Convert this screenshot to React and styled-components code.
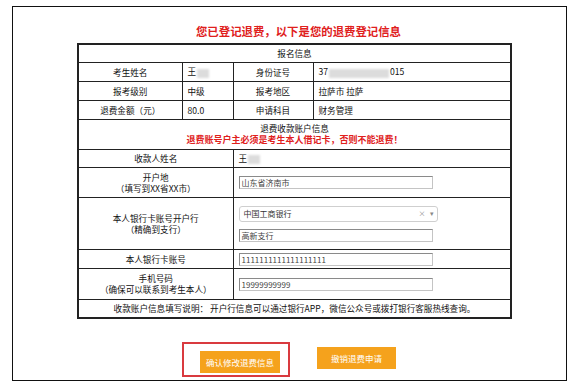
import React from "react";
import styled, { createGlobalStyle } from "styled-components";

const GlobalStyle = createGlobalStyle`
  html, body {
    margin: 0;
    padding: 0;
    background: #fff;
  }
  body {
    font-family: "Noto Sans CJK SC", "Noto Sans", sans-serif;
    color: #111;
  }
`;

const Frame = styled.div`
  margin: 6px 0 0 12px;
  width: 555px;
  height: 375px;
  border: 1px solid #111;
  padding-left: 64px;
  box-sizing: border-box;
`;

const Inner = styled.div`
  width: 433px;
`;

const Title = styled.h1`
  margin: 0;
  padding: 17px 0 0 10px;
  height: 19px;
  font-size: 11.4px;
  line-height: 14px;
  font-weight: bold;
  color: #e0201c;
  text-align: center;
`;

const Table = styled.table`
  width: 433px;
  border-collapse: collapse;
  table-layout: fixed;
  border: 2px solid #222;
  font-size: 8.6px;
  line-height: 11px;
`;

const Cell = styled.td`
  border: 1px solid #222;
  padding: 0 5px;
  height: ${(p) => p.$h || 17}px;
  text-align: ${(p) => (p.$left ? "left" : "center")};
  vertical-align: middle;
  color: #111;
`;

const Warn = styled.div`
  color: #e0201c;
  font-size: 9px;
  font-weight: bold;
  line-height: 12px;
`;

const Blur = styled.span`
  display: inline-block;
  width: ${(p) => p.$w}px;
  height: 9px;
  margin: 0 ${(p) => p.$m || 0}px 0 1px;
  background: #dcdcdc;
  filter: blur(1px);
  vertical-align: middle;
`;

const Field = styled.div`
  width: 190px;
  height: 11px;
  border: 1px solid #8a8a8a;
  border-right-color: #c4c4c4;
  border-bottom-color: #c4c4c4;
  font-size: 8px;
  line-height: 11px;
  padding-left: 2px;
  color: #444;
`;

const Select = styled.div`
  width: 190px;
  height: 14px;
  border: 1px solid #cfcfcf;
  border-radius: 3px;
  padding: 0 3px 0 4px;
  display: flex;
  align-items: center;
  justify-content: space-between;
  font-size: 8px;
  color: #333;
  margin-bottom: 7px;
`;

const SelectIcons = styled.span`
  display: flex;
  gap: 4px;
  color: #888;
  font-size: 7px;
`;

const Buttons = styled.div`
  display: flex;
  justify-content: center;
  gap: 37px;
  padding-left: 9px;
  margin-top: 28px;
`;

const Marked = styled.div`
  position: relative;
`;

const Highlight = styled.div`
  position: absolute;
  left: -18px;
  right: -10px;
  top: -5px;
  bottom: -4px;
  border: 2px solid #d93a3f;
  pointer-events: none;
`;

const Button = styled.button`
  width: ${(p) => p.$w || 80}px;
  height: 22px;
  border: none;
  background: #f5a21c;
  color: #fff;
  font-family: inherit;
  font-size: 8.5px;
  padding: 0;
  cursor: pointer;
`;

export default function App() {
  return (
    <>
      <GlobalStyle />
      <Frame>
        <Inner>
          <Title>您已登记退费，以下是您的退费登记信息</Title>
          <Table>
            <colgroup>
              <col style={{ width: 104 }} />
              <col style={{ width: 51 }} />
              <col style={{ width: 80 }} />
              <col style={{ width: 198 }} />
            </colgroup>
            <tbody>
              <tr>
                <Cell colSpan={4}>报名信息</Cell>
              </tr>
              <tr>
                <Cell $h={18}>考生姓名</Cell>
                <Cell $left>
                  王<Blur $w={12} />
                </Cell>
                <Cell>身份证号</Cell>
                <Cell $left>
                  37<Blur $w={60} $m={1} />
                  015
                </Cell>
              </tr>
              <tr>
                <Cell $h={18}>报考级别</Cell>
                <Cell $left>中级</Cell>
                <Cell>报考地区</Cell>
                <Cell $left>拉萨市 拉萨</Cell>
              </tr>
              <tr>
                <Cell $h={18}>退费金额（元）</Cell>
                <Cell $left>80.0</Cell>
                <Cell>申请科目</Cell>
                <Cell $left>财务管理</Cell>
              </tr>
              <tr>
                <Cell colSpan={4} $h={29}>
                  退费收款账户信息
                  <Warn>退费账号户主必须是考生本人借记卡，否则不能退费！</Warn>
                </Cell>
              </tr>
              <tr>
                <Cell colSpan={2}>收款人姓名</Cell>
                <Cell colSpan={2} $left>
                  王<Blur $w={12} />
                </Cell>
              </tr>
              <tr>
                <Cell colSpan={2} $h={29}>
                  开户地
                  <br />
                  （填写到XX省XX市）
                </Cell>
                <Cell colSpan={2} $left>
                  <Field>山东省济南市</Field>
                </Cell>
              </tr>
              <tr>
                <Cell colSpan={2} $h={51}>
                  本人银行卡账号开户行
                  <br />
                  （精确到支行）
                </Cell>
                <Cell colSpan={2} $left>
                  <Select>
                    中国工商银行
                    <SelectIcons>
                      <span>×</span>
                      <span>▾</span>
                    </SelectIcons>
                  </Select>
                  <Field>高新支行</Field>
                </Cell>
              </tr>
              <tr>
                <Cell colSpan={2} $h={18}>本人银行卡账号</Cell>
                <Cell colSpan={2} $left>
                  <Field>1111111111111111111</Field>
                </Cell>
              </tr>
              <tr>
                <Cell colSpan={2} $h={30}>
                  手机号码
                  <br />
                  （确保可以联系到考生本人）
                </Cell>
                <Cell colSpan={2} $left>
                  <Field>19999999999</Field>
                </Cell>
              </tr>
              <tr>
                <Cell colSpan={4}>
                  收款账户信息填写说明： 开户行信息可以通过银行APP，微信公众号或拨打银行客服热线查询。
                </Cell>
              </tr>
            </tbody>
          </Table>
          <Buttons>
            <Marked>
              <Button>确认修改退费信息</Button>
              <Highlight />
            </Marked>
            <Button $w={79}>撤销退费申请</Button>
          </Buttons>
        </Inner>
      </Frame>
    </>
  );
}
